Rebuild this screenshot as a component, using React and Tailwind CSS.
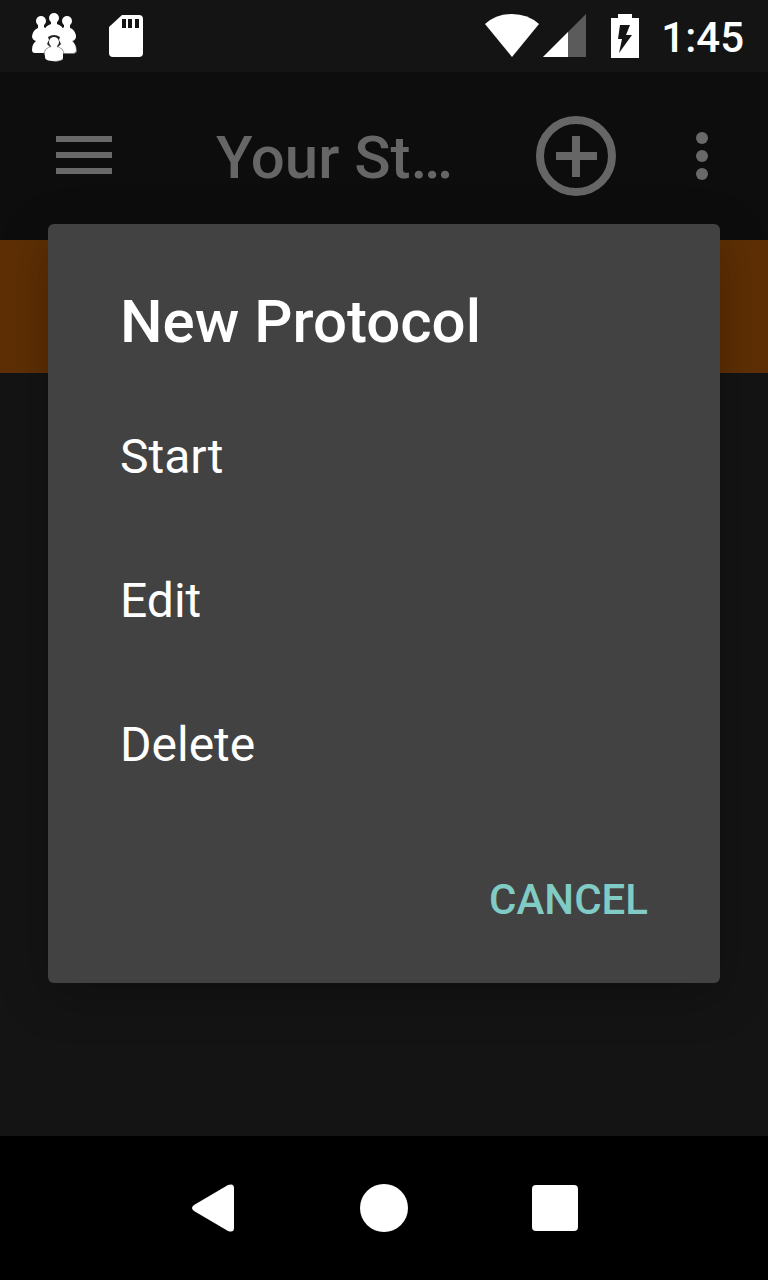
import { useState } from 'react';

const PeopleIcon = () => (
  <svg viewBox="0 0 48 52" className="h-[52px] w-12" aria-hidden="true">
    <path
      d="M5 27 Q3 21 9 18 H41 Q46 21 46 28 L43 32 Q47 36 47 42 L44 44 H33 V50 L26 52 L17 50 Z"
      fill="#777"
    />
    <g fill="#fff">
      <circle cx="11" cy="11" r="5" />
      <circle cx="24" cy="8" r="5" />
      <circle cx="37" cy="11" r="5" />
      <path d="M8 14 H14 V17 L17 20 L20 27 V43 H5 Q2 43 2 40 Q2 34 6 31 Q2 30 2 26 Q3 20 8 18Z" />
      <path d="M34 14 H40 V18 Q45 20 46 26 Q46 30 42 31 Q46 34 46 40 Q46 43 43 43 H28 V27 L31 20 L34 17Z" />
      <path d="M21 11 H27 V14 Q33 16 34 21 V26 H14 V21 Q15 16 21 14Z" />
    </g>
    <path d="M18 27 Q24 23 30 27 L29 30 L31 34 L28 37 H20 L17 34 L19 30Z" fill="#222" />
    <path d="M14 43 Q15 38 20 37 H28 Q33 38 34 43" fill="none" stroke="#999" strokeWidth="1" />
    <g fill="#fff">
      <circle cx="24" cy="32" r="5" />
      <path d="M21 35 H27 V37 Q33 39 33 44 V48 Q32 51 24 51 Q16 51 15 48 V44 Q15 39 21 37Z" />
    </g>
  </svg>
);

const SdCardIcon = () => (
  <svg viewBox="0 0 34 44" className="h-11 w-[34px]" aria-hidden="true">
    <path d="M13 1 H30 Q34 1 34 5 V39 Q34 43 30 43 H4 Q0 43 0 39 V13Z" fill="#fff" />
    <path d="M13 5 h4 v9 h-4z M19 5 h4 v9 h-4z M26 5 h4 v9 h-4z" fill="#141414" />
  </svg>
);

const WifiIcon = () => (
  <svg viewBox="0 0 54 44" className="h-11 w-[54px]" aria-hidden="true">
    <path d="M0 10 Q11 0 27 0 Q43 0 54 10 L27 43Z" fill="#fff" />
  </svg>
);

const SignalIcon = () => (
  <svg viewBox="0 0 44 44" className="h-11 w-11" aria-hidden="true">
    <path d="M43 0 V43 H0Z" fill="#5b5b5b" />
    <path d="M25 18 V43 H0Z" fill="#fff" />
  </svg>
);

const BatteryIcon = () => (
  <svg viewBox="0 0 28 44" className="h-11 w-7" aria-hidden="true">
    <path d="M7 0 H21 V4 H28 V44 H0 V4 H7Z" fill="#fff" />
    <path d="M9 11 H19 L15 21 H21 L8 39 L11 25 H7Z" fill="#141414" />
  </svg>
);

const StatusBar = () => (
  <header className="flex h-[72px] items-center bg-[#141414] pr-6 pl-[30px]">
    <PeopleIcon />
    <div className="ml-[31px]">
      <SdCardIcon />
    </div>
    <div className="ml-auto flex items-center">
      <WifiIcon />
      <div className="ml-1">
        <SignalIcon />
      </div>
      <div className="ml-6">
        <BatteryIcon />
      </div>
      <span className="ml-[22px] pt-1 text-[42px] leading-[48px] font-medium text-white">1:45</span>
    </div>
  </header>
);

const AppBar = () => (
  <div className="flex h-[168px] items-center bg-[#0d0d0d] pr-[60px] pl-14">
    <button type="button" aria-label="Menu">
      <svg viewBox="0 0 56 40" className="h-10 w-14" fill="#696969">
        <path d="M0 0 h56 v6 h-56z M0 16 h56 v6 h-56z M0 32 h56 v6 h-56z" />
      </svg>
    </button>
    <h1 className="ml-[104px] flex-1 pt-1 text-[60px] leading-[72px] font-medium whitespace-nowrap text-[#666]">Your St…</h1>
    <button type="button" aria-label="Add study">
      <svg viewBox="0 0 80 80" className="h-20 w-20" fill="none" stroke="#666" strokeWidth="8">
        <circle cx="40" cy="40" r="36" />
        <path d="M20 40 H61 M40 20 V61" />
      </svg>
    </button>
    <button type="button" aria-label="More options" className="ml-20">
      <svg viewBox="0 0 12 48" className="h-12 w-3" fill="#696969">
        <circle cx="6" cy="6" r="6" />
        <circle cx="6" cy="24" r="6" />
        <circle cx="6" cy="42" r="6" />
      </svg>
    </button>
  </div>
);

const options = ['Start', 'Edit', 'Delete'];

const ProtocolDialog = ({ onClose }) => (
  <div className="absolute inset-0 flex items-center px-12 pb-px">
    <div
      role="dialog"
      aria-labelledby="dialog-title"
      className="w-full rounded-md bg-[#424242] shadow-[0_12px_48px_rgba(0,0,0,0.25)]"
    >
      <h2 id="dialog-title" className="px-[72px] pt-[62px] pb-[27px] text-[60px] leading-[72px] font-medium text-white">
        New Protocol
      </h2>
      <ul>
        {options.map((option) => (
          <li key={option}>
            <button type="button" className="h-36 w-full px-[72px] text-left text-[48px] leading-[56px] text-white">
              {option}
            </button>
          </li>
        ))}
      </ul>
      <div className="flex justify-end px-12 py-3">
        <button
          type="button"
          onClick={onClose}
          className="h-[142px] px-6 text-[42px] leading-[48px] font-medium text-[#80cbc4] uppercase"
        >
          Cancel
        </button>
      </div>
    </div>
  </div>
);

const NavBar = () => (
  <nav className="grid h-36 grid-cols-[1fr_171px_171px_171px_1fr] items-center justify-items-center bg-black">
    <button type="button" aria-label="Back" className="col-start-2">
      <svg viewBox="0 0 42 48" className="h-12 w-[42px]" fill="#fff">
        <path d="M2 21 L36 1 Q42 -1 42 4 V44 Q42 49 36 47 L2 27 Q-2 24 2 21Z" />
      </svg>
    </button>
    <button type="button" aria-label="Home" className="h-12 w-12 rounded-full bg-white" />
    <button type="button" aria-label="Recent apps" className="h-[46px] w-[46px] rounded bg-white" />
  </nav>
);

export default function App() {
  const [open, setOpen] = useState(true);

  return (
    <div className="flex min-h-screen flex-col bg-[#141414] font-['Roboto',sans-serif]">
      <StatusBar />
      <main className="relative flex-1 overflow-hidden">
        <AppBar />
        <div className="h-[133px] bg-[#5e2f04]" />
        {open && <ProtocolDialog onClose={() => setOpen(false)} />}
      </main>
      <NavBar />
    </div>
  );
}
